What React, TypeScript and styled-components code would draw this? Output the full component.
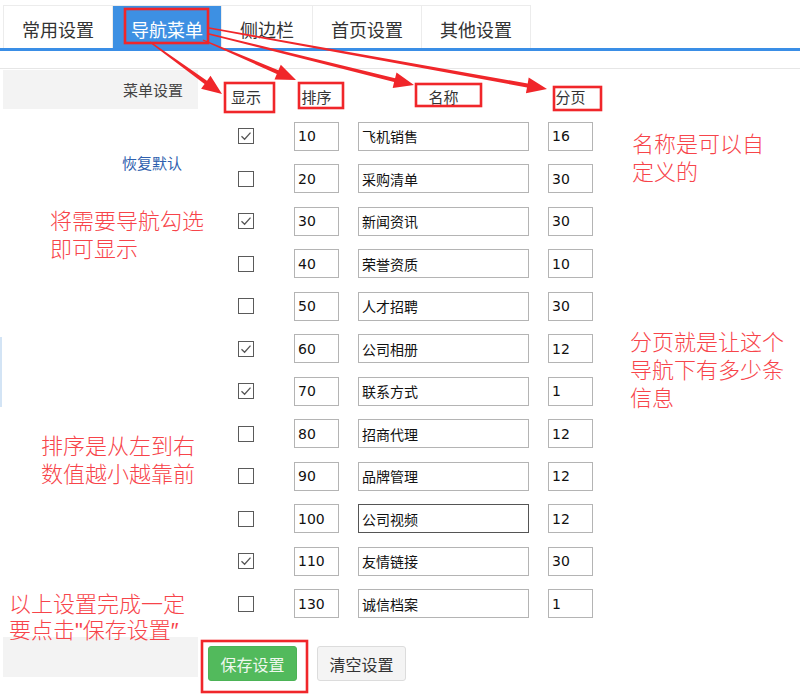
import styled, { createGlobalStyle } from "styled-components";

const GlobalStyle = createGlobalStyle`
  html, body {
    margin: 0;
    padding: 0;
    background: #fff;
  }
  body {
    font-family: "Noto Sans CJK SC", "Noto Sans", sans-serif;
    color: #333;
  }
`;

type RowData = {
    on: boolean;
    order: number;
    name: string;
    page: number;
    focused?: boolean;
};

const tabs = ["常用设置", "导航菜单", "侧边栏", "首页设置", "其他设置"];

const rows: RowData[] = [
    {on: true, order: 10, name: "飞机销售", page: 16},
    {on: false, order: 20, name: "采购清单", page: 30},
    {on: true, order: 30, name: "新闻资讯", page: 30},
    {on: false, order: 40, name: "荣誉资质", page: 10},
    {on: false, order: 50, name: "人才招聘", page: 30},
    {on: true, order: 60, name: "公司相册", page: 12},
    {on: true, order: 70, name: "联系方式", page: 1},
    {on: false, order: 80, name: "招商代理", page: 12},
    {on: false, order: 90, name: "品牌管理", page: 12},
    {on: false, order: 100, name: "公司视频", page: 12, focused: true},
    {on: true, order: 110, name: "友情链接", page: 30},
    {on: false, order: 130, name: "诚信档案", page: 1},
];

const notes = [
    {top: 131, left: 632, lines: ["名称是可以自", "定义的"]},
    {top: 208, left: 50, lines: ["将需要导航勾选", "即可显示"]},
    {top: 329, left: 630, lines: ["分页就是让这个", "导航下有多少条", "信息"]},
    {top: 433, left: 41, lines: ["排序是从左到右", "数值越小越靠前"]},
    {top: 592, left: 9, lines: ["以上设置完成一定", "要点击\"保存设置\u2033"], tight: true},
];

// annotation boxes: x, y, w, h
const boxes = [
    [125, 9, 83, 34],
    [225, 83, 49, 29],
    [299, 83, 44, 25],
    [416, 84, 65, 22],
    [554, 87, 47, 23],
    [202, 641, 105, 51],
];

const arrows = [
    [150, 42, 222, 94],
    [203, 40, 296, 80],
    [209, 34, 414, 85],
    [209, 28, 547, 89],
];

const arrowShape = (x1: number, y1: number, x2: number, y2: number) => {
    const dx = x2 - x1;
    const dy = y2 - y1;
    const len = Math.sqrt(dx * dx + dy * dy);
    const ux = dx / len;
    const uy = dy / len;
    const nx = -uy;
    const ny = ux;
    const head = 20;
    const hw = 8;
    const sw = 2;
    const bx = x2 - ux * head;
    const by = y2 - uy * head;
    const pts = [
        [x1 + nx * 0.7, y1 + ny * 0.7],
        [bx + nx * sw, by + ny * sw],
        [bx + nx * hw, by + ny * hw],
        [x2, y2],
        [bx - nx * hw, by - ny * hw],
        [bx - nx * sw, by - ny * sw],
        [x1 - nx * 0.7, y1 - ny * 0.7],
    ];
    return pts.map(p => p.map(v => v.toFixed(1)).join(",")).join(" ");
};

export default function App() {
    return (
        <SPage>
            <GlobalStyle/>
            <STabBar>
                {tabs.map((t, i) => (
                    <STab key={t} $active={i === 1}>{t}</STab>
                ))}
            </STabBar>

            <SBody>
                <SSidebar>
                    <SSideTitle>菜单设置</SSideTitle>
                    <SResetLink>恢复默认</SResetLink>
                </SSidebar>
                <STable>
                    <SHeaderRow>
                        <SHeadCell>显示</SHeadCell>
                        <SHeadCell>排序</SHeadCell>
                        <SHeadCell>名称</SHeadCell>
                        <SHeadCell>分页</SHeadCell>
                    </SHeaderRow>
                    <SRows>
                        {rows.map(r => (
                            <SRow key={r.order}>
                                <SCheck>
                                    {r.on && (
                                        <svg width="14" height="14" viewBox="0 0 14 14">
                                            <path d="M2.5 7.2 L5.6 10.2 L11.5 3.6" fill="none" stroke="#555" strokeWidth="1.3"/>
                                        </svg>
                                    )}
                                </SCheck>
                                <SInput readOnly value={String(r.order)}/>
                                <SInput readOnly value={r.name} $focused={r.focused}/>
                                <SInput readOnly value={String(r.page)}/>
                            </SRow>
                        ))}
                    </SRows>
                </STable>
            </SBody>

            <SFooter>
                <SFooterLabel/>
                <SSaveButton>保存设置</SSaveButton>
                <SClearButton>清空设置</SClearButton>
            </SFooter>

            <SEdgeBar/>

            {notes.map(n => (
                <SNote key={n.lines[0]} style={{top: n.top, left: n.left}} $tight={n.tight}>
                    {n.lines.map(l => <span key={l}>{l}</span>)}
                </SNote>
            ))}

            <SMarks width="800" height="699" viewBox="0 0 800 699">
                {boxes.map(([x, y, w, h]) => (
                    <rect key={`${x}-${y}`} x={x} y={y} width={w} height={h} fill="none" stroke="#f0262a" strokeWidth="2.6"/>
                ))}
                {arrows.map(([x1, y1, x2, y2]) => (
                    <polygon key={`${x2}-${y2}`} points={arrowShape(x1, y1, x2, y2)} fill="#f0262a"/>
                ))}
            </SMarks>
        </SPage>
    );
}

const SPage = styled.div`
  position: relative;
  width: 800px;
  height: 699px;
  overflow: hidden;
  background: #fff;
`;

const STabBar = styled.div`
  display: flex;
  padding: 5px 0 0 3px;
  border-bottom: 3px solid #3a8ee6;
`;

const STab = styled.div<{ $active?: boolean }>`
  height: 43px;
  box-sizing: border-box;
  padding: 3px 18px 0;
  display: flex;
  align-items: center;
  border: 1px solid #ececec;
  border-bottom: none;
  margin-right: -1px;
  font-size: 18px;
  color: ${p => (p.$active ? "#fff" : "#333")};
  background: ${p => (p.$active ? "#3d90e3" : "#fff")};
`;

const SBody = styled.div`
  display: flex;
  margin-top: 17px;
  border-top: 1px solid #e6e6e6;
  padding: 1px 0 0 3px;
`;

const SSidebar = styled.div`
  width: 195px;
`;

const SSideTitle = styled.div`
  height: 39px;
  line-height: 40px;
  background: #f3f3f3;
  text-align: right;
  padding-right: 15px;
  font-size: 15px;
  color: #444;
`;

const SResetLink = styled.div`
  margin-top: 44px;
  line-height: 20px;
  text-align: right;
  padding-right: 16px;
  font-size: 15px;
  color: #2f5fae;
`;

const STable = styled.div`
  margin-left: 19px;
`;

const SGrid = styled.div`
  display: grid;
  grid-template-columns: 58px 45px 171px 45px;
  column-gap: 19px;
`;

const SHeaderRow = styled(SGrid)`
  height: 39px;
  align-items: end;
`;

const SHeadCell = styled.div`
  text-align: center;
  line-height: 20px;
  margin-bottom: 2px;
  font-size: 15px;
  color: #333;
`;

const SRows = styled.div`
  padding-top: 6px;
`;

const SRow = styled(SGrid)`
  height: 42.5px;
  align-items: center;
`;

const SCheck = styled.div`
  justify-self: center;
  width: 16px;
  height: 16px;
  box-sizing: border-box;
  border: 1px solid #5a5a5a;
  background: #fff;
  display: flex;
  align-items: center;
  justify-content: center;
`;

const SInput = styled.input<{ $focused?: boolean }>`
  width: 100%;
  height: 29px;
  box-sizing: border-box;
  margin: 0;
  padding: 0 3px;
  border: 1px solid ${p => (p.$focused ? "#555" : "#b4b4b4")};
  border-radius: 0;
  outline: none;
  background: #fff;
  font-family: "DejaVu Sans", "Noto Sans CJK SC", sans-serif;
  font-size: 14px;
  color: #111;
`;

const SFooter = styled.div`
  display: flex;
  align-items: flex-start;
  margin-top: 12px;
  padding-left: 3px;
`;

const SFooterLabel = styled.div`
  width: 195px;
  height: 40px;
  background: #f3f3f3;
`;

const SButton = styled.button`
  width: 89px;
  height: 35px;
  margin-top: 9px;
  border-radius: 3px;
  font-family: "Noto Sans CJK SC", sans-serif;
  font-size: 16px;
  padding: 0;
`;

const SSaveButton = styled(SButton)`
  margin-left: 10px;
  border: 1px solid #4cb356;
  background: #52ba5c;
  color: #eef8ee;
`;

const SClearButton = styled(SButton)`
  margin-left: 20px;
  border: 1px solid #dcdcdc;
  background: #f4f4f4;
  color: #333;
`;

const SEdgeBar = styled.div`
  position: absolute;
  left: 0;
  top: 337px;
  width: 2px;
  height: 70px;
  background: #d3e4f5;
`;

const SNote = styled.div<{ $tight?: boolean }>`
  position: absolute;
  display: flex;
  flex-direction: column;
  font-family: "Liberation Sans", "Noto Sans CJK SC", sans-serif;
  font-size: 22px;
  font-weight: 300;
  line-height: ${p => (p.$tight ? "26px" : "28px")};
  color: #f7444a;
  white-space: nowrap;
`;

const SMarks = styled.svg`
  position: absolute;
  left: 0;
  top: 0;
  pointer-events: none;
`;
